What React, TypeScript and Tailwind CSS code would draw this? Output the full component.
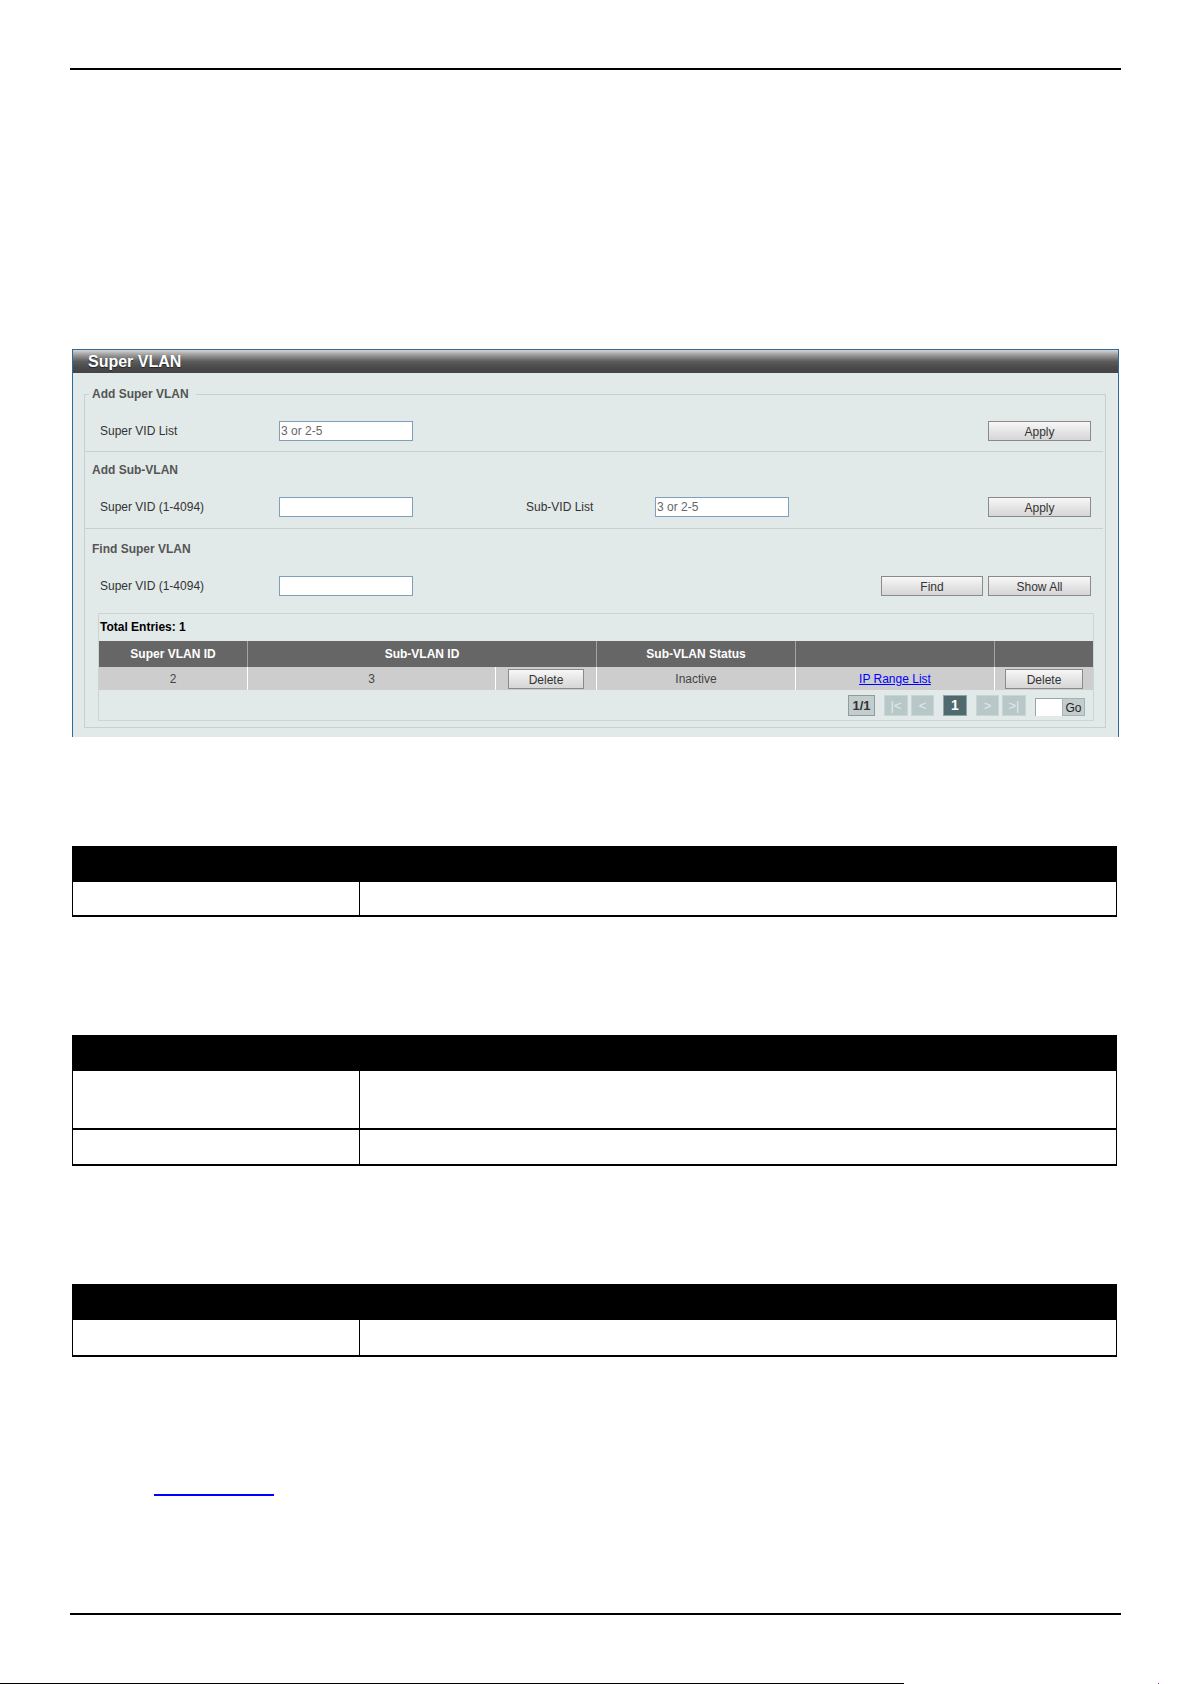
import React from 'react';

// grey push button used across the Super VLAN panel
const Btn = ({ label, w }: { label: string; w: string }) => (
  <button
    type="button"
    className={`${w} h-[20px] border border-[#8a8a8a] bg-[linear-gradient(180deg,#f7f7f7_0%,#e4e4e4_55%,#d6d6d6_100%)] pt-[2px] text-[12px] leading-none text-[#333]`}
  >
    {label}
  </button>
);

const Field = ({ value = '', w = 'w-[134px]' }: { value?: string; w?: string }) => (
  <input
    readOnly
    value={value}
    className={`${w} h-[20px] border border-[#7f9fbd] bg-white px-[1px] text-[12px] text-[#666] outline-none`}
  />
);

const Label = ({ text, w }: { text: string; w: string }) => (
  <span className={`${w} shrink-0 text-[12px] text-[#333]`}>{text}</span>
);

const Heading = ({ text, mt }: { text: string; mt: string }) => (
  <div className={`${mt} pl-[7px] text-[12px] leading-[14px] font-bold text-[#555]`}>{text}</div>
);

const Sep = ({ mt }: { mt: string }) => <div className={`${mt} mr-[2px] h-px bg-[#c6d0d0]`} />;

// pager chips at the bottom of the entries table
const Pager = () => (
  <div className="mt-[5px] flex h-[22px] items-start justify-end pr-[8px] text-[13px]">
    <span className="flex h-[21px] w-[27px] items-center justify-center border border-[#8e9c9c] bg-[#c3cdcd] font-bold text-[#333]">
      1/1
    </span>
    <span className="ml-[9px] flex h-[21px] w-[24px] items-center justify-center border border-[#c9d4d4] bg-[#b8c7c8] text-[#e3eaea]">
      |&lt;
    </span>
    <span className="ml-[3px] flex h-[21px] w-[23px] items-center justify-center border border-[#c9d4d4] bg-[#b8c7c8] text-[#e3eaea]">
      &lt;
    </span>
    <span className="ml-[9px] flex h-[21px] w-[24px] items-center justify-center border border-[#8fa2a4] bg-[#4f6a6f] text-[14px] font-bold text-white">
      1
    </span>
    <span className="ml-[9px] flex h-[21px] w-[23px] items-center justify-center border border-[#c9d4d4] bg-[#b8c7c8] text-[#e3eaea]">
      &gt;
    </span>
    <span className="ml-[3px] flex h-[21px] w-[24px] items-center justify-center border border-[#c9d4d4] bg-[#b8c7c8] text-[#e3eaea]">
      &gt;|
    </span>
    <input
      readOnly
      value=""
      className="ml-[9px] mt-[3px] h-[18px] w-[27px] border-l border-t border-[#9aa5a5] bg-white outline-none"
    />
    <span className="mt-[3px] flex h-[18px] w-[23px] items-center justify-center border border-[#a7b3b3] bg-[#c3cdcd] pt-[2px] text-[12px] text-[#222]">
      Go
    </span>
  </div>
);

const EntriesTable = () => (
  <div className="ml-[13px] mt-[17px] w-[996px] border border-[#cbd5d5] pb-[3px]">
    <div className="flex h-[27px] items-center pb-[1px] pl-[1px] text-[12px] font-bold text-black">Total Entries: 1</div>
    <div className="flex h-[26px] bg-[#666] text-[12px] font-bold text-white">
      <div className="flex w-[148px] items-center justify-center">Super VLAN ID</div>
      <div className="flex w-[349px] items-center justify-center border-l border-[#a3a3a3]">Sub-VLAN ID</div>
      <div className="flex w-[199px] items-center justify-center border-l border-[#a3a3a3]">Sub-VLAN Status</div>
      <div className="w-[199px] border-l border-[#a3a3a3]" />
      <div className="flex-1 border-l border-[#a3a3a3]" />
    </div>
    <div className="flex h-[23px] bg-[#cdcdcd] text-[12px] text-[#444]">
      <div className="flex w-[148px] items-center justify-center">2</div>
      <div className="flex w-[248px] items-center justify-center border-l border-white">3</div>
      <div className="flex w-[101px] items-center justify-center border-l border-white">
        <Btn label="Delete" w="w-[76px]" />
      </div>
      <div className="flex w-[199px] items-center justify-center border-l border-white">Inactive</div>
      <div className="flex w-[199px] items-center justify-center border-l border-white">
        <a href="#" className="text-[#0000ff] underline">
          IP Range List
        </a>
      </div>
      <div className="flex flex-1 items-center justify-center border-l border-white">
        <Btn label="Delete" w="w-[78px]" />
      </div>
    </div>
    <Pager />
  </div>
);

// black-header parameter table from the manual page
const DocTable = ({ mt, rows }: { mt: string; rows: string[] }) => (
  <div className={`${mt} ml-[72px] w-[1045px]`}>
    <div className="h-[36px] bg-black" />
    {rows.map((h, i) => (
      <div key={i} className={`${h} flex border-x border-b-2 border-black`}>
        <div className="w-[287px] border-r border-black" />
        <div className="flex-1" />
      </div>
    ))}
  </div>
);

export default function App() {
  return (
    <div className="h-[1684px] w-[1192px] overflow-hidden bg-white font-['Liberation_Sans',Arial,sans-serif]">
      <div className="pt-[68px]">
        <div className="ml-[70px] h-[2px] w-[1051px] bg-black" />
      </div>

      <section className="ml-[72px] mt-[279px] h-[388px] w-[1047px] overflow-hidden border-x border-t border-[#2f6a98] bg-[#e2eae9]">
        <div className="flex h-[23px] items-center bg-[linear-gradient(180deg,#d6d6d6_0%,#9a9a9a_22%,#5c5c5c_50%,#4a4a4a_75%,#444_100%)] pl-[15px] text-[16px] font-bold text-white [text-shadow:0_1px_1px_#222]">
          Super VLAN
        </div>

        <fieldset className="ml-[11px] mt-[14px] w-[1022px] border border-[#c6d0d0] pb-[6px]">
          <legend className="ml-[4px] pl-[3px] pr-[7px] text-[12px] font-bold leading-[14px] text-[#555]">
            Add Super VLAN
          </legend>

          <div className="mt-[19px] flex h-[21px] items-center pl-[15px] pr-[14px]">
            <Label text="Super VID List" w="w-[179px]" />
            <Field value="3 or 2-5" />
            <div className="ml-auto">
              <Btn label="Apply" w="w-[103px]" />
            </div>
          </div>

          <Sep mt="mt-[10px]" />
          <Heading text="Add Sub-VLAN" mt="mt-[11px]" />

          <div className="mt-[19px] flex h-[21px] items-center pl-[15px] pr-[14px]">
            <Label text="Super VID (1-4094)" w="w-[179px]" />
            <Field />
            <span className="ml-[113px] w-[129px] shrink-0 text-[12px] text-[#333]">Sub-VID List</span>
            <Field value="3 or 2-5" />
            <div className="ml-auto">
              <Btn label="Apply" w="w-[103px]" />
            </div>
          </div>

          <Sep mt="mt-[11px]" />
          <Heading text="Find Super VLAN" mt="mt-[13px]" />

          <div className="mt-[19px] flex h-[21px] items-center pl-[15px] pr-[14px]">
            <Label text="Super VID (1-4094)" w="w-[179px]" />
            <Field />
            <div className="ml-auto flex gap-[5px]">
              <Btn label="Find" w="w-[102px]" />
              <Btn label="Show All" w="w-[103px]" />
            </div>
          </div>

          <EntriesTable />
        </fieldset>
      </section>

      <DocTable mt="mt-[109px]" rows={['h-[35px]']} />
      <DocTable mt="mt-[118px]" rows={['h-[59px]', 'h-[36px]']} />
      <DocTable mt="mt-[118px]" rows={['h-[37px]']} />

      <div className="ml-[154px] mt-[137px] h-[2px] w-[120px] bg-[#0000ff]" />

      <div className="ml-[70px] mt-[117px] h-[2px] w-[1051px] bg-black" />

      <div className="mt-[68px] flex">
        <div className="h-px w-[904px] bg-black" />
        <div className="ml-[254px] h-px w-px bg-[#6a2c8c]" />
      </div>
    </div>
  );
}
